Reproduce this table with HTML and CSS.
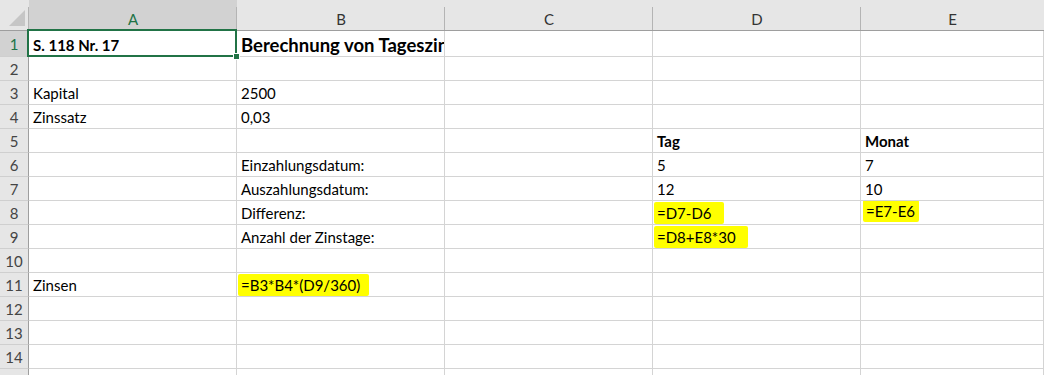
FILE: index.html
```html
<!DOCTYPE html>
<html lang="de">
<head>
 <meta charset="UTF-8">
 <meta name="viewport" content="width=device-width, initial-scale=1.0">
 <title>Tageszinsen</title>
 <link rel="stylesheet" href="styles.css">
</head>
<body>
 <div class="sheet">
 <!-- column headers -->
 <div class="ch corner"><span class="corner-tri"></span></div>
 <div class="ch sel">A</div>
 <div class="ch">B</div>
 <div class="ch">C</div>
 <div class="ch">D</div>
 <div class="ch last">E</div>

 <div class="rh sel r1">1</div>
 <div class="cell r1 bold active">S. 118 Nr. 17<span class="handle"></span></div>
 <div class="cell r1 bold title">Berechnung von Tageszinsen</div>
 <div class="cell r1"></div>
 <div class="cell r1"></div>
 <div class="cell r1"></div>

 <div class="rh">2</div>
 <div class="cell"></div><div class="cell"></div><div class="cell"></div><div class="cell"></div><div class="cell"></div>

 <div class="rh">3</div>
 <div class="cell">Kapital</div>
 <div class="cell">2500</div>
 <div class="cell"></div><div class="cell"></div><div class="cell"></div>

 <div class="rh">4</div>
 <div class="cell">Zinssatz</div>
 <div class="cell">0,03</div>
 <div class="cell"></div><div class="cell"></div><div class="cell"></div>

 <div class="rh">5</div>
 <div class="cell"></div><div class="cell"></div><div class="cell"></div>
 <div class="cell bold">Tag</div>
 <div class="cell bold">Monat</div>

 <div class="rh">6</div>
 <div class="cell"></div>
 <div class="cell">Einzahlungsdatum:</div>
 <div class="cell"></div>
 <div class="cell">5</div>
 <div class="cell">7</div>

 <div class="rh">7</div>
 <div class="cell"></div>
 <div class="cell">Auszahlungsdatum:</div>
 <div class="cell"></div>
 <div class="cell">12</div>
 <div class="cell">10</div>

 <div class="rh">8</div>
 <div class="cell"></div>
 <div class="cell">Differenz:</div>
 <div class="cell"></div>
 <div class="cell"><span class="mark mark-d8">=D7-D6</span></div>
 <div class="cell"><span class="mark mark-e8">=E7-E6</span></div>

 <div class="rh">9</div>
 <div class="cell"></div>
 <div class="cell">Anzahl der Zinstage:</div>
 <div class="cell"></div>
 <div class="cell"><span class="mark mark-d9">=D8+E8*30</span></div>
 <div class="cell"></div>

 <div class="rh">10</div>
 <div class="cell"></div><div class="cell"></div><div class="cell"></div><div class="cell"></div><div class="cell"></div>

 <div class="rh">11</div>
 <div class="cell">Zinsen</div>
 <div class="cell"><span class="mark mark-b11">=B3*B4*(D9/360)</span></div>
 <div class="cell"></div><div class="cell"></div><div class="cell"></div>

 <div class="rh">12</div>
 <div class="cell"></div><div class="cell"></div><div class="cell"></div><div class="cell"></div><div class="cell"></div>

 <div class="rh">13</div>
 <div class="cell"></div><div class="cell"></div><div class="cell"></div><div class="cell"></div><div class="cell"></div>

 <div class="rh">14</div>
 <div class="cell"></div><div class="cell"></div><div class="cell"></div><div class="cell"></div><div class="cell"></div>

 <!-- next row only peeks in at the bottom edge -->
 <div class="rh"></div>
 <div class="cell"></div><div class="cell"></div><div class="cell"></div><div class="cell"></div><div class="cell"></div>
 </div>
</body>
</html>
```

FILE: styles.css
```css
* {
 margin: 0;
 padding: 0;
 box-sizing: border-box;
}
body {
 background: #ffffff;
 font-family: Lato, "Liberation Sans", sans-serif;
 font-size: 15px;
 color: #000000;
 overflow: hidden;
}
.sheet {
 display: grid;
 grid-template-columns: 29px 208px 208px 208px 208px 1fr;
 grid-template-rows: 31px 26px repeat(14, 24px);
 width: 1044px;
}
/* column header strip */
.ch {
 background: #e6e6e6;
 border-bottom: 1px solid #9e9e9e;
 padding-top: 7px;
 display: flex;
 align-items: center;
 justify-content: center;
 color: #333333;
 position: relative;
}
.ch::after {
 content: "";
 position: absolute;
 right: 0;
 top: 7px;
 bottom: 0;
 width: 1px;
 background: #b4b4b4;
}
.ch.last::after {
 display: none;
}
.ch.sel {
 background: #d2d2d2;
 color: #217346;
 border-bottom: 2px solid #217346;
 padding-top: 8px;
}
.corner {
 padding: 0;
}
.corner-tri {
 position: absolute;
 right: 4px;
 bottom: 4px;
 width: 0;
 height: 0;
 border-left: 16px solid transparent;
 border-bottom: 16px solid #c6c6c6;
}
/* row headers */
.rh {
 background: #e6e6e6;
 border-right: 1px solid #9e9e9e;
 border-bottom: 1px solid #cfcfcf;
 display: flex;
 align-items: center;
 justify-content: center;
 color: #444444;
 padding-top: 1px;
}
.rh.sel {
 background: #d2d2d2;
 color: #217346;
}
/* cells */
.cell {
 border-right: 1px solid #d4d4d4;
 border-bottom: 1px solid #d4d4d4;
 padding: 0 4px;
 display: flex;
 align-items: center;
 white-space: nowrap;
 overflow: hidden;
 position: relative;
 padding-top: 1px;
}
.cell.r1 {
 padding-top: 2px;
}
.bold {
 font-weight: 700;
}
.cell.title {
 font-size: 18.5px;
 padding-top: 3px;
}
.cell.active {
 overflow: visible;
 z-index: 2;
}
.cell.active::before {
 content: "";
 position: absolute;
 left: -2px;
 top: -2px;
 right: -1px;
 bottom: -1px;
 border: 2px solid #217346;
}
.handle {
 position: absolute;
 right: -4px;
 bottom: -4px;
 width: 7px;
 height: 7px;
 background: #217346;
 border: 1px solid #ffffff;
}
/* marker highlights */
.mark {
 background: #ffff00;
 margin-left: -3px;
 padding: 2px 10px 2px 3px;
 border-radius: 2px;
}
.mark-d8 {
 padding-right: 12px;
}
.mark-e8 {
 margin-left: -2px;
 padding-right: 4px;
 position: relative;
 top: -2px;
}
.mark-d9 {
 padding-right: 12px;
}
.mark-b11 {
 padding-right: 9px;
}
```
